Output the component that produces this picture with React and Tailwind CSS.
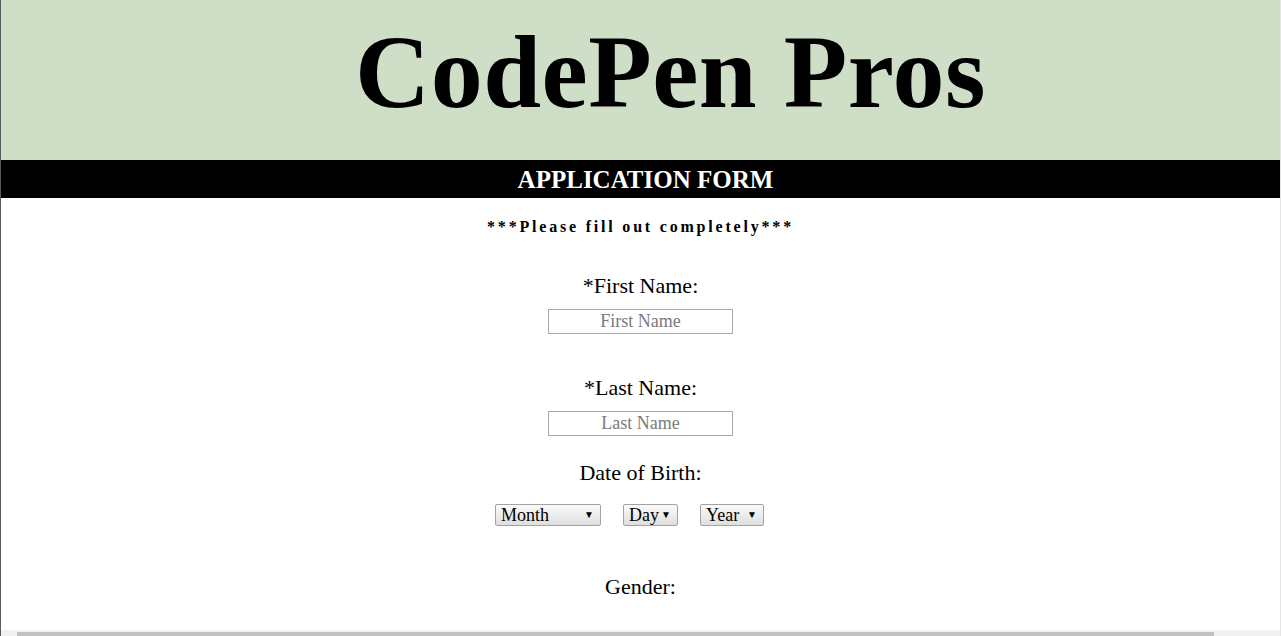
import React from "react";

const serif = "font-['Liberation_Serif','Times_New_Roman',serif]";

function Select({ label, width }) {
  return (
    <div
      className={`flex h-[22px] ${width} items-center justify-between rounded-[2px] border border-[#a3a3a3] bg-gradient-to-b from-[#fbfbfb] to-[#dedede] pl-[5px] pr-[6px] text-[18px] leading-none text-black`}
    >
      <span>{label}</span>
      <span className="text-[10px]">▼</span>
    </div>
  );
}

function Field({ label, placeholder }) {
  return (
    <div className="flex flex-col items-center">
      <label className="text-[22px] leading-[24px] text-black">{label}</label>
      <input
        type="text"
        placeholder={placeholder}
        className="mt-[11px] h-[25px] w-[185px] border border-[#a9a9a9] bg-white text-center text-[18px] leading-none outline-none placeholder-[#7b7b7b]"
      />
    </div>
  );
}

export default function App() {
  return (
    <div className={`relative flex h-[636px] w-full flex-col overflow-hidden border-l border-r border-l-[#5a5a5a] border-r-[#e6e6e6] bg-white ${serif}`}>
      {/* title banner */}
      <header className="flex h-[160px] items-center justify-center bg-[#cfdec7] pl-[60px]">
        <h1 className="mt-[-16px] text-[104px] font-bold leading-none tracking-[0.5px] text-black">CodePen Pros</h1>
      </header>

      <div className="flex h-[38px] items-center justify-center bg-black pl-[10px]">
        <h2 className="text-[25px] font-bold leading-none text-white">APPLICATION FORM</h2>
      </div>

      <form className="flex flex-col items-center">
        <p className="mt-[20px] text-[16px] font-bold leading-[18px] tracking-[2.8px] text-black">
          ***Please fill out completely***
        </p>

        <div className="mt-[38px]">
          <Field label="*First Name:" placeholder="First Name" />
        </div>
        <div className="mt-[42px]">
          <Field label="*Last Name:" placeholder="Last Name" />
        </div>

        <label className="mt-[25px] text-[22px] leading-[24px] text-black">Date of Birth:</label>
        <div className="mt-[19px] flex gap-[22px] pr-[22px]">
          <Select label="Month" width="w-[106px]" />
          <Select label="Day" width="w-[55px]" />
          <Select label="Year" width="w-[64px]" />
        </div>

        <label className="mt-[49px] text-[22px] leading-[24px] text-black">Gender:</label>
      </form>

      {/* horizontal scrollbar of the frame */}
      <div className="absolute bottom-0 left-0 right-0 flex h-[6px] items-end bg-[#f1f1f1]">
        <div className="ml-[16px] h-[4px] w-[1197px] bg-[#c1c1c1]" />
      </div>
    </div>
  );
}
